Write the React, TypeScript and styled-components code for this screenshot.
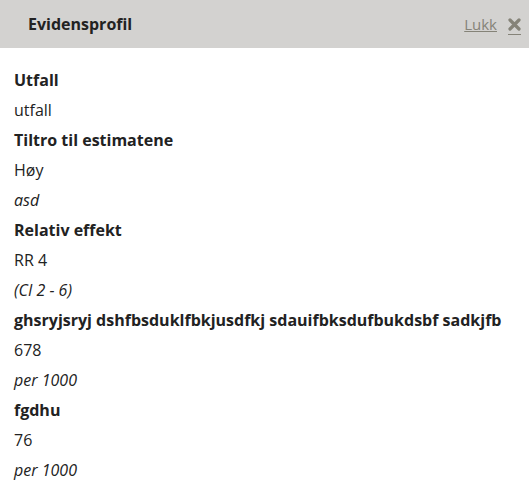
import React from 'react'
import styled, { createGlobalStyle } from 'styled-components'

const GlobalStyle = createGlobalStyle`
  body {
    margin: 0;
    background: #ffffff;
    font-family: 'Open Sans', 'Liberation Sans', sans-serif;
    color: #222222;
  }
`

const Panel = styled.div`
  width: 529px;
  min-height: 488px;
  background: #ffffff;
`

const Header = styled.div`
  display: flex;
  align-items: center;
  justify-content: space-between;
  height: 48px;
  padding: 0 8px 0 28px;
  background: #d3d2d0;
  box-sizing: border-box;
`

const Title = styled.h2`
  margin: 0;
  font-size: 16px;
  font-weight: 700;
  color: #222222;
`

const CloseLink = styled.a`
  display: flex;
  align-items: center;
  gap: 11px;
  color: #858378;
  font-size: 15px;
  text-decoration: underline;
  cursor: pointer;
`

const CloseIcon = styled.span`
  display: inline-flex;
  flex-direction: column;
  align-items: center;
  gap: 3px;
  padding-top: 4px;
  &::after {
    content: '';
    width: 13px;
    height: 1px;
    background: #858378;
  }
`

const rowsKinds = ['label', 'value', 'note'] as const
type Kind = (typeof rowsKinds)[number]

const Body = styled.div`
  padding: 17px 14px 0;
`

const Line = styled.div<{ $kind?: Kind }>`
  height: 30px;
  line-height: 30px;
  font-size: 16px;
  white-space: nowrap;
  font-weight: ${(p) => (p.$kind === 'label' ? 700 : 400)};
  font-style: ${(p) => (p.$kind === 'note' ? 'italic' : 'normal')};
`

const rows: { kind: Kind; text: string }[] = [
  { kind: 'label', text: 'Utfall' },
  { kind: 'value', text: 'utfall' },
  { kind: 'label', text: 'Tiltro til estimatene' },
  { kind: 'value', text: 'Høy' },
  { kind: 'note', text: 'asd' },
  { kind: 'label', text: 'Relativ effekt' },
  { kind: 'value', text: 'RR 4' },
  { kind: 'note', text: '(CI 2 - 6)' },
  { kind: 'label', text: 'ghsryjsryj dshfbsduklfbkjusdfkj sdauifbksdufbukdsbf sadkjfb' },
  { kind: 'value', text: '678' },
  { kind: 'note', text: 'per 1000' },
  { kind: 'label', text: 'fgdhu' },
  { kind: 'value', text: '76' },
  { kind: 'note', text: 'per 1000' },
]

export default function App() {
  return (
    <>
      <GlobalStyle />
      <Panel>
        <Header>
          <Title>Evidensprofil</Title>
          <CloseLink>
            Lukk
            <CloseIcon>
              <svg width="13" height="13" viewBox="0 0 13 13" aria-hidden="true">
                <path
                  d="M2 2 L11 11 M11 2 L2 11"
                  stroke="#858378"
                  strokeWidth="3.2"
                  strokeLinecap="round"
                />
              </svg>
            </CloseIcon>
          </CloseLink>
        </Header>
        <Body>
          {rows.map((r, i) => (
            <Line key={i} $kind={r.kind}>
              {r.text}
            </Line>
          ))}
        </Body>
      </Panel>
    </>
  )
}
